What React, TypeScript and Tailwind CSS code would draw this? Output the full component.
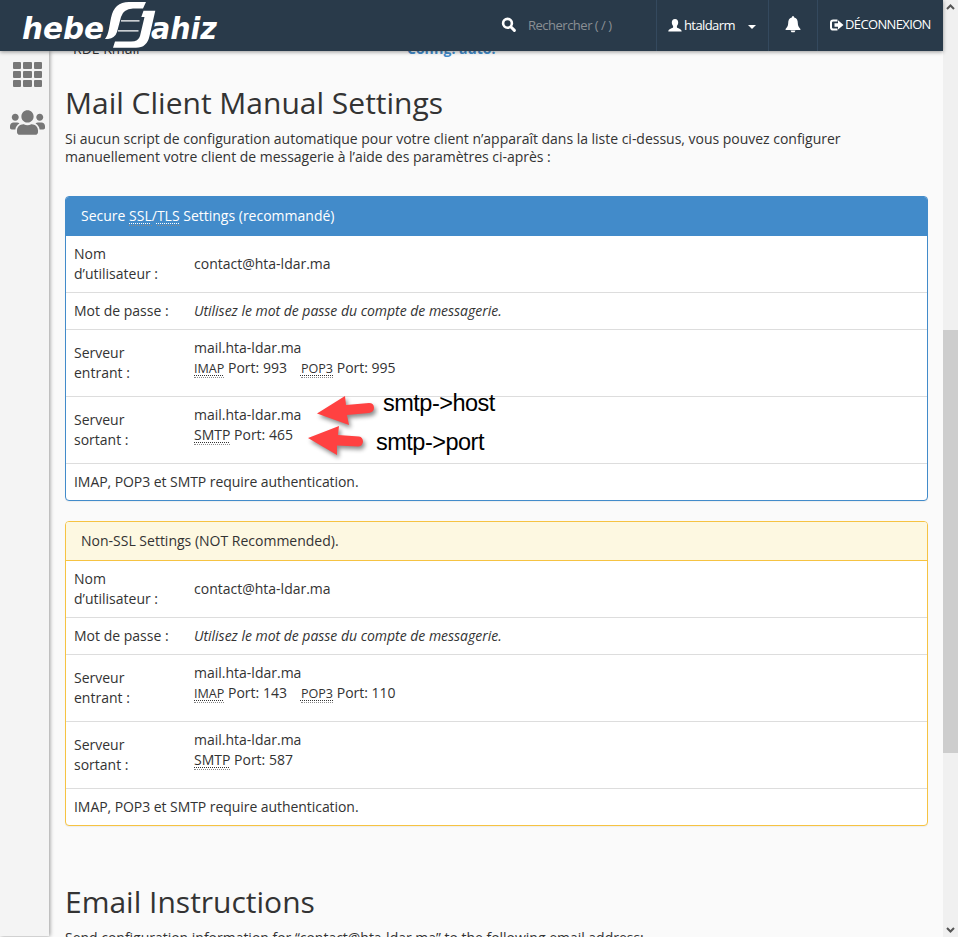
import React from "react";
import { FaUsers } from "react-icons/fa";

const Abbr = ({ children, small = false }: { children: React.ReactNode; small?: boolean }) => (
  <abbr
    className={`border-b border-dotted border-[#888] underline decoration-dotted decoration-1 underline-offset-2 ${small ? "text-[12.6px]" : ""}`}
  >
    {children}
  </abbr>
);

const Row = ({ label, children, first = false }: { label: string; children: React.ReactNode; first?: boolean }) => (
  <div className={`flex items-center p-2 ${first ? "" : "border-t border-[#ddd]"}`}>
    <div className="w-[120px] shrink-0 pr-5">{label}</div>
    <div>{children}</div>
  </div>
);

type PanelProps = {
  title: React.ReactNode;
  border: string;
  head: string;
  imap: string;
  pop: string;
  smtp: string;
};

const Panel = ({ title, border, head, imap, pop, smtp }: PanelProps) => (
  <section className={`mb-5 overflow-hidden rounded border bg-white text-[14px] leading-5 shadow-[0_1px_1px_rgba(0,0,0,0.05)] ${border}`}>
    <h4 className={`h-[39px] border-b px-[15px] pt-[9px] ${head}`}>{title}</h4>
    <Row label="Nom d’utilisateur :" first>contact@hta-ldar.ma</Row>
    <Row label="Mot de passe :">
      <em className="tracking-[-0.02px]">Utilisez le mot de passe du compte de messagerie.</em>
    </Row>
    <Row label="Serveur entrant :">
      <div className="mb-2.5">
        <div className="h-5">mail.hta-ldar.ma</div>
        <div className="flex h-5 gap-[14px]">
          <span><Abbr small>IMAP</Abbr> Port: {imap}</span>
          <span><Abbr small>POP3</Abbr> Port: {pop}</span>
        </div>
      </div>
    </Row>
    <Row label="Serveur sortant :">
      <div className="mb-2.5">
        <div className="h-5">mail.hta-ldar.ma</div>
        <div className="h-5"><Abbr>SMTP</Abbr> Port: {smtp}</div>
      </div>
    </Row>
    <div className="border-t border-[#ddd] p-2 tracking-[-0.06px]">IMAP, POP3 et SMTP require authentication.</div>
  </section>
);

const Logo = () => (
  <svg width="200" height="50" viewBox="20 0 200 50" className="ml-5 shrink-0" fill="#fff">
    <g fontFamily="'DejaVu Sans', sans-serif" fontWeight="bold" fontStyle="italic" fontSize="30">
      <text x="22" y="39" textLength="82" lengthAdjust="spacingAndGlyphs">hebe</text>
      <text x="151" y="39" textLength="66" lengthAdjust="spacingAndGlyphs">ahiz</text>
    </g>
    <path d="M105 39C109 34 109 27 111 18Q114 2 129 2H146L143 8.5H133Q123 9 121 17L117 32Q115 38 108 39Z" />
    <path d="M143.5 10.7H155.3L149.5 36Q147 47.8 136 47.8H113L115 41.5H131Q138.5 41.5 140 36L144.5 17H141.3Z" />
    <path d="M121 20.2H139.5V21.5H121Z M118 30.2H138.5V31.5H118Z" />
  </svg>
);

export default function App() {
  return (
    <div className="flex h-[937px] w-[958px] overflow-hidden bg-[#fafafa] font-['Open_Sans','Noto_Sans',sans-serif] text-[14px] text-[#333]">
      <div className="flex w-[943px] shrink-0 flex-col">
        <header className="z-10 flex h-[51px] shrink-0 bg-[#293a4a] text-[13px] text-white shadow-[0_1px_4px_rgba(0,0,0,0.4)]">
          <Logo />
          <div className="ml-[281px] flex w-[155px] items-center">
            <svg width="16" height="16" viewBox="0 0 16 16" fill="none" stroke="#fff" className="mb-0.5">
              <circle cx="6.5" cy="6.3" r="4.4" strokeWidth="2.6" />
              <path d="M10 10l3.4 3.4" strokeWidth="3" strokeLinecap="round" />
            </svg>
            <span className="ml-[11px] text-[13px] tracking-[-0.5px] text-[#8a8f94]">Rechercher ( / )</span>
          </div>
          <div className="flex w-28 items-center border-l border-[#34495e] pl-[11px]">
            <svg width="14" height="13" viewBox="0 0 14 13" fill="#fff">
              <path d="M7 0C4.8 0 3.8 1.5 3.8 3.6C3.8 5 4.4 6.2 5.1 7V8.2C4.8 9.3 .3 9.7 .3 12.5H13.7C13.7 9.7 9.2 9.3 8.9 8.2V7C9.6 6.2 10.2 5 10.2 3.6C10.2 1.5 9.2 0 7 0Z" />
            </svg>
            <span className="ml-0.5 tracking-[-0.6px]">htaldarm</span>
            <svg width="8" height="4" viewBox="0 0 8 4" fill="#fff" className="ml-[13px] mt-0.5"><path d="M0 0h8L4 4z" /></svg>
          </div>
          <div className="flex w-[49px] items-center justify-center border-l border-[#34495e]">
            <svg width="16" height="17" viewBox="0 0 16 17" fill="#fff" className="mb-[3px]">
              <path d="M8 0Q9.2 0 9.2 1.5C12 2.2 12.8 4.5 12.8 7C12.8 10 14 11.5 15.4 13V14H.6V13C2 11.5 3.2 10 3.2 7C3.2 4.5 4 2.2 6.8 1.5Q6.8 0 8 0ZM5.5 14.6H10.5L9.5 16.2H6.5Z" />
            </svg>
          </div>
          <div className="flex flex-1 items-center border-l border-[#34495e] pb-0.5 pl-3">
            <svg width="14" height="12" viewBox="0 0 14 12" className="mr-px">
              <path d="M7.5 1.4H3.2Q1 1.4 1 3.4V8.4Q1 10.5 3.2 10.5H7.5" fill="none" stroke="#fff" strokeWidth="2" />
              <path d="M4.5 4.3H8V1.3L13.5 6L8 10.5V7.7H4.5Z" fill="#fff" />
            </svg>
            <span className="whitespace-nowrap tracking-[-0.64px]">DÉCONNEXION</span>
          </div>
        </header>
        <div className="flex min-h-0 flex-1">
          <nav className="flex h-[885px] w-[49px] shrink-0 flex-col items-center bg-[#f4f4f4] pl-1.5 pt-[11px] shadow-[1px_0_4px_rgba(0,0,0,0.4)]">
            <div className="grid grid-cols-3 gap-x-0.5 gap-y-0.5">
              {Array.from({ length: 9 }, (_, i) => (
                <i key={i} className="h-[7px] w-[8.4px] rounded-[1px] bg-[#777]" />
              ))}
            </div>
            <FaUsers className="mt-[18px] text-[35px] text-[#777]" />
          </nav>
          <main className="min-w-0 flex-1 pl-4 pr-[15px]">
            <div className="-mt-[12px] flex h-5 pl-2 leading-5">
              <span className="w-[334px]">RDE Kmail</span>
              <b className="text-[#428bca]">Config. auto.</b>
            </div>
            <h2 className="mt-[27px] text-[30px] leading-[33px]">Mail Client Manual Settings</h2>
            <p className="mt-[11px] whitespace-nowrap leading-[18px] tracking-[-0.018px]">
              Si aucun script de configuration automatique pour votre client n’apparaît dans la liste ci-dessus, vous pouvez configurer<br />
              manuellement votre client de messagerie à l’aide des paramètres ci-après :
            </p>
            <div className="relative mt-[30px]">
              <Panel
                title={<>Secure <Abbr>SSL</Abbr>/<Abbr>TLS</Abbr> Settings (recommandé)</>}
                border="border-[#428bca]"
                head="border-[#428bca] bg-[#428bca] text-white"
                imap="993" pop="995" smtp="465"
              />
              <svg width="74" height="76" viewBox="305 388 74 76" className="absolute left-[240px] top-[192px]" fill="#ff4141">
                <g className="drop-shadow-[2px_3px_2px_rgba(0,0,0,0.45)]">
                  <path d="M317 413.5L345 396L346 405L369 403Q374 403 374 408Q374 412 369 413L347 415L349 425Z" />
                  <path d="M308 438L339 426L338 435L359 436.5Q363 437 363 442Q362 446.500 358 446.500L337 445.500L337 455Z" />
                </g>
              </svg>
              <span className="absolute left-[318px] top-[193px] font-['Liberation_Sans',sans-serif] text-[23.5px] leading-7 tracking-[-0.5px] text-black">smtp-&gt;host</span>
              <span className="absolute left-[311px] top-[232px] font-['Liberation_Sans',sans-serif] text-[23.5px] leading-7 tracking-[-0.5px] text-black">smtp-&gt;port</span>
            </div>
            <Panel
              title="Non-SSL Settings (NOT Recommended)."
              border="border-[#f6c342]"
              head="border-[#f6c342] bg-[#fdf8e1]"
              imap="143" pop="110" smtp="587"
            />
            <h2 className="mt-[59px] text-[30px] leading-[33px]">Email Instructions</h2>
            <p className="mt-[11px] whitespace-nowrap leading-[18px] tracking-[-0.018px]">Send configuration information for “contact@hta-ldar.ma” to the following email address:</p>
          </main>
        </div>
      </div>
      <aside className="flex w-[15px] shrink-0 flex-col items-center bg-[#f0f0f0]">
        <svg width="9" height="6" viewBox="0 0 9 6" fill="none" stroke="#555" strokeWidth="2" className="mt-1"><path d="M1 5L4.5 1.5L8 5" /></svg>
        <div className="mt-[320px] h-[423px] w-full bg-[#cdcdcd]" />
        <svg width="9" height="6" viewBox="0 0 9 6" fill="none" stroke="#555" strokeWidth="2" className="mb-1 mt-auto"><path d="M1 1L4.5 4.5L8 1" /></svg>
      </aside>
    </div>
  );
}
